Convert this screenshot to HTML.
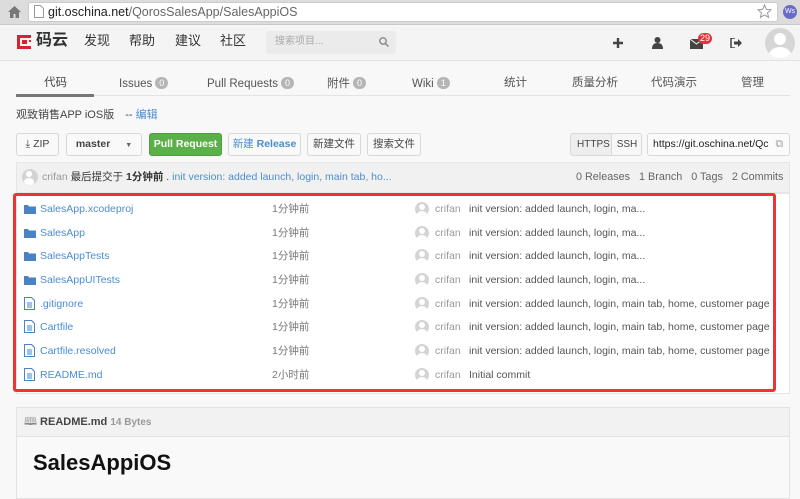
<!DOCTYPE html>
<html><head><meta charset="utf-8"><style>
*{box-sizing:border-box;margin:0;padding:0}
body{width:800px;height:492px;overflow:hidden;background:#f8f8f8;font-family:"Liberation Sans","Noto Sans CJK SC",sans-serif;position:relative;color:#333}
.a{position:absolute;white-space:nowrap;line-height:1.15}
.badge{display:inline-block;background:#b5b5b5;color:#fff;border-radius:8px;font-size:9px;line-height:12px;padding:0 4px;margin-left:3px;vertical-align:1px}
.btn{position:absolute;top:133px;height:23px;border:1px solid #d8d8d8;border-radius:3px;background:#f9f9f9;font-size:10.5px;line-height:21px;text-align:center;color:#444;white-space:nowrap}
.row{position:absolute;left:0;width:760px;height:20px;font-size:10.5px}
.av{position:absolute;width:14px;height:14px;border-radius:50%;background:#d4d4d4;overflow:hidden}
.av::after{content:"";position:absolute;left:4px;top:2px;width:6px;height:6px;border-radius:50%;background:#fff}
.av::before{content:"";position:absolute;left:2px;top:9px;width:10px;height:8px;border-radius:50%;background:#fff}
</style></head><body>
<div class="a" style="left:0;top:0;width:800px;height:25px;background:#dcdcdc;border-bottom:1px solid #c8c8c8"></div>
<svg class="a" style="left:8px;top:6px" width="13" height="12"><path d="M6.5 0L0 6h2v6h3.5V8h2v4H11V6h2z" fill="#777"/></svg>
<div class="a" style="left:28px;top:2px;width:750px;height:20px;background:#fff;border:1px solid #ccc;border-radius:2px"></div>
<svg class="a" style="left:34px;top:5px" width="10" height="13"><path d="M.5.5h6l3 3v9h-9z" fill="#fff" stroke="#999"/></svg>
<div class="a" style="left:48px;top:5px;font-size:12.5px;color:#222">git.oschina.net<span style="color:#666">/QorosSalesApp/SalesAppiOS</span></div>
<svg class="a" style="left:757px;top:4px" width="15" height="15"><path d="M7.5 1l1.9 4.4 4.6.4-3.5 3 1.1 4.6-4.1-2.5-4.1 2.5 1.1-4.6-3.5-3 4.6-.4z" fill="none" stroke="#999"/></svg>
<div class="a" style="left:783px;top:5px;width:14px;height:14px;border-radius:50%;background:#6a6ac8;color:#fff;font-size:7px;line-height:14px;text-align:center">Ws</div>
<div class="a" style="left:0;top:26px;width:800px;height:35px;background:#f4f4f4;border-bottom:1px solid #e2e2e2"></div>
<svg class="a" style="left:16px;top:34px" width="16" height="16"><path d="M1 1h14v3H4v8h11v3H1z M6 6h5v4H6z M13 6h2v2h-2z" fill="#d8232a"/></svg>
<div class="a" style="left:36px;top:32px;font-size:16px;font-weight:bold;color:#333">码云</div>
<div class="a" style="left:84px;top:34px;font-size:13px;color:#333">发现</div>
<div class="a" style="left:129px;top:34px;font-size:13px;color:#333">帮助</div>
<div class="a" style="left:175px;top:34px;font-size:13px;color:#333">建议</div>
<div class="a" style="left:220px;top:34px;font-size:13px;color:#333">社区</div>
<div class="a" style="left:266px;top:31px;width:130px;height:23px;background:#ebebeb;border-radius:3px"></div>
<div class="a" style="left:275px;top:36px;font-size:10px;color:#aaa">搜索项目...</div>
<svg class="a" style="left:379px;top:37px" width="10" height="10"><circle cx="4" cy="4" r="3.2" fill="none" stroke="#888" stroke-width="1.4"/><path d="M6.5 6.5L9.5 9.5" stroke="#888" stroke-width="1.5"/></svg>
<svg class="a" style="left:613px;top:38px" width="10" height="10"><path d="M5 0v10M0 5h10" stroke="#444" stroke-width="2.4"/></svg>
<svg class="a" style="left:652px;top:37px" width="11" height="12"><circle cx="5.5" cy="3" r="3" fill="#444"/><path d="M0 12q0-6 5.5-6t5.5 6z" fill="#444"/></svg>
<svg class="a" style="left:690px;top:39px" width="13" height="10"><rect width="13" height="10" fill="#444"/><path d="M0 0l6.5 5L13 0" stroke="#f4f4f4" fill="none"/></svg>
<div class="a" style="left:698px;top:33px;background:#e0343a;color:#fff;font-size:9px;border-radius:6px;padding:0 2px;line-height:11px">29</div>
<svg class="a" style="left:730px;top:38px" width="12" height="10"><path d="M5 0H1v10h4" fill="none" stroke="#444" stroke-width="1.5"/><path d="M4 3.5h4V1l4 4-4 4V6.5H4z" fill="#444"/></svg>
<div class="a" style="left:765px;top:28px;width:30px;height:30px;border-radius:50%;background:#d6d6d6;overflow:hidden"><div style="position:absolute;left:9px;top:5px;width:12px;height:12px;border-radius:50%;background:#fff"></div><div style="position:absolute;left:4px;top:19px;width:22px;height:16px;border-radius:50%;background:#fff"></div></div>
<div class="a" style="left:16px;top:95px;width:774px;height:1px;background:#e3e3e3"></div>
<div class="a" style="left:16px;top:94px;width:78px;height:3px;background:#777"></div>
<div class="a" style="left:44px;top:77px;font-size:11.5px;color:#444">代码</div>
<div class="a" style="left:119px;top:77px;font-size:11.5px;color:#555">Issues<span class="badge">0</span></div>
<div class="a" style="left:207px;top:77px;font-size:11.5px;color:#555">Pull Requests<span class="badge">0</span></div>
<div class="a" style="left:327px;top:77px;font-size:11.5px;color:#555">附件<span class="badge">0</span></div>
<div class="a" style="left:412px;top:77px;font-size:11.5px;color:#555">Wiki<span class="badge">1</span></div>
<div class="a" style="left:504px;top:77px;font-size:11.5px;color:#555">统计</div>
<div class="a" style="left:572px;top:77px;font-size:11.5px;color:#555">质量分析</div>
<div class="a" style="left:651px;top:77px;font-size:11.5px;color:#555">代码演示</div>
<div class="a" style="left:741px;top:77px;font-size:11.5px;color:#555">管理</div>
<div class="a" style="left:16px;top:109px;font-size:11px;color:#444">观致销售APP iOS版 <span style="margin-left:8px">-- </span><span style="color:#4a8ed0">编辑</span></div>
<div class="btn" style="left:16px;width:43px">⤓ ZIP</div>
<div class="btn" style="left:66px;width:76px;font-weight:bold">master <span style="font-size:7px;margin-left:12px;color:#666">▼</span></div>
<div class="btn" style="left:149px;width:73px;background:#5cb049;border-color:#4f9f3e;color:#fff;font-weight:bold">Pull Request</div>
<div class="btn" style="left:228px;width:73px;color:#4a8ed0">新建 <b>Release</b></div>
<div class="btn" style="left:307px;width:54px">新建文件</div>
<div class="btn" style="left:367px;width:54px">搜索文件</div>
<div class="btn" style="left:570px;width:72px;background:#eee;text-align:left;padding-left:6px;font-size:10px;overflow:hidden">HTTPS<span style="position:absolute;left:40px;top:0;width:31px;height:21px;background:#f7f7f7;border-left:1px solid #d8d8d8;text-align:center">SSH</span></div>
<div class="btn" style="left:647px;width:143px;text-align:left;padding-left:5px;color:#222;background:#fbfbfb;overflow:hidden"><span style="display:inline-block;width:117px;overflow:hidden;vertical-align:top">https://git.oschina.net/Qc</span><span style="position:absolute;right:6px;top:0;color:#999">⧉</span></div>
<div class="a" style="left:16px;top:162px;width:774px;height:31px;background:#f1f1f1;border:1px solid #e6e6e6"></div>
<div class="av" style="left:22px;top:169px;width:16px;height:16px"></div>
<div class="a" style="left:42px;top:171px;font-size:10.5px;color:#999">crifan <span style="color:#333">最后提交于 <b>1分钟前</b> . </span><span style="color:#4a8ed0">init version: added launch, login, main tab, ho...</span></div>
<div class="a" style="left:576px;top:171px;font-size:10.8px;color:#666">0 Releases &nbsp; 1 Branch &nbsp; 0 Tags &nbsp; 2 Commits</div>
<div class="a" style="left:16px;top:193px;width:774px;height:201px;background:#fff;border:1px solid #e6e6e6"></div>
<div class="a" style="left:13px;top:193px;width:763px;height:199px;border:3px solid #ee3333;border-radius:3px"></div>
<div class="a" style="left:0;top:0;width:800px">
<div style="position:absolute;top:203px;left:0">
<div class="row" style="top:0"><svg class="a" style="left:24px;top:1px" width="12" height="10"><path d="M0 1h4l1 1.5h7V10H0z" fill="#4a83c4"/></svg><span class="a" style="left:40px;color:#4a8ed0">SalesApp.xcodeproj</span><span class="a" style="left:272px;color:#777">1分钟前</span><div class="av" style="left:415px;top:-1px"></div><span class="a" style="left:435px;color:#999">crifan</span><span class="a" style="left:469px;color:#555">init version: added launch, login, ma...</span></div>
<div class="row" style="top:23.5px"><svg class="a" style="left:24px;top:1px" width="12" height="10"><path d="M0 1h4l1 1.5h7V10H0z" fill="#4a83c4"/></svg><span class="a" style="left:40px;color:#4a8ed0">SalesApp</span><span class="a" style="left:272px;color:#777">1分钟前</span><div class="av" style="left:415px;top:-1px"></div><span class="a" style="left:435px;color:#999">crifan</span><span class="a" style="left:469px;color:#555">init version: added launch, login, ma...</span></div>
<div class="row" style="top:47px"><svg class="a" style="left:24px;top:1px" width="12" height="10"><path d="M0 1h4l1 1.5h7V10H0z" fill="#4a83c4"/></svg><span class="a" style="left:40px;color:#4a8ed0">SalesAppTests</span><span class="a" style="left:272px;color:#777">1分钟前</span><div class="av" style="left:415px;top:-1px"></div><span class="a" style="left:435px;color:#999">crifan</span><span class="a" style="left:469px;color:#555">init version: added launch, login, ma...</span></div>
<div class="row" style="top:71px"><svg class="a" style="left:24px;top:1px" width="12" height="10"><path d="M0 1h4l1 1.5h7V10H0z" fill="#4a83c4"/></svg><span class="a" style="left:40px;color:#4a8ed0">SalesAppUITests</span><span class="a" style="left:272px;color:#777">1分钟前</span><div class="av" style="left:415px;top:-1px"></div><span class="a" style="left:435px;color:#999">crifan</span><span class="a" style="left:469px;color:#555">init version: added launch, login, ma...</span></div>
<div class="row" style="top:94.5px"><svg class="a" style="left:24px;top:-1px" width="11" height="13"><path d="M.5.5h7l3 3v9H.5z" fill="#fff" stroke="#4a83c4"/><path d="M3 6h5M3 8h5M3 10h5" stroke="#4a83c4"/></svg><span class="a" style="left:40px;color:#4a8ed0">.gitignore</span><span class="a" style="left:272px;color:#777">1分钟前</span><div class="av" style="left:415px;top:-1px"></div><span class="a" style="left:435px;color:#999">crifan</span><span class="a" style="left:469px;color:#555">init version: added launch, login, main tab, home, customer page</span></div>
<div class="row" style="top:118px"><svg class="a" style="left:24px;top:-1px" width="11" height="13"><path d="M.5.5h7l3 3v9H.5z" fill="#fff" stroke="#4a83c4"/><path d="M3 6h5M3 8h5M3 10h5" stroke="#4a83c4"/></svg><span class="a" style="left:40px;color:#4a8ed0">Cartfile</span><span class="a" style="left:272px;color:#777">1分钟前</span><div class="av" style="left:415px;top:-1px"></div><span class="a" style="left:435px;color:#999">crifan</span><span class="a" style="left:469px;color:#555">init version: added launch, login, main tab, home, customer page</span></div>
<div class="row" style="top:142px"><svg class="a" style="left:24px;top:-1px" width="11" height="13"><path d="M.5.5h7l3 3v9H.5z" fill="#fff" stroke="#4a83c4"/><path d="M3 6h5M3 8h5M3 10h5" stroke="#4a83c4"/></svg><span class="a" style="left:40px;color:#4a8ed0">Cartfile.resolved</span><span class="a" style="left:272px;color:#777">1分钟前</span><div class="av" style="left:415px;top:-1px"></div><span class="a" style="left:435px;color:#999">crifan</span><span class="a" style="left:469px;color:#555">init version: added launch, login, main tab, home, customer page</span></div>
<div class="row" style="top:165.5px"><svg class="a" style="left:24px;top:-1px" width="11" height="13"><path d="M.5.5h7l3 3v9H.5z" fill="#fff" stroke="#4a83c4"/><path d="M3 6h5M3 8h5M3 10h5" stroke="#4a83c4"/></svg><span class="a" style="left:40px;color:#4a8ed0">README.md</span><span class="a" style="left:272px;color:#777">2小时前</span><div class="av" style="left:415px;top:-1px"></div><span class="a" style="left:435px;color:#999">crifan</span><span class="a" style="left:469px;color:#555">Initial commit</span></div>
</div></div>
<div class="a" style="left:16px;top:407px;width:774px;height:92px;background:#f9f9f9;border:1px solid #e3e3e3"></div>
<div class="a" style="left:17px;top:408px;width:772px;height:29px;background:#f2f2f2;border-bottom:1px solid #e3e3e3"></div>
<div class="a" style="left:24px;top:416px;font-size:11px;color:#444"><span style="color:#888">🕮</span> <b>README.md</b> <span style="color:#999;font-size:10px;font-weight:bold">14 Bytes</span></div>
<div class="a" style="left:33px;top:450px;font-size:22px;font-weight:bold;color:#111">SalesAppiOS</div>
</body></html>
